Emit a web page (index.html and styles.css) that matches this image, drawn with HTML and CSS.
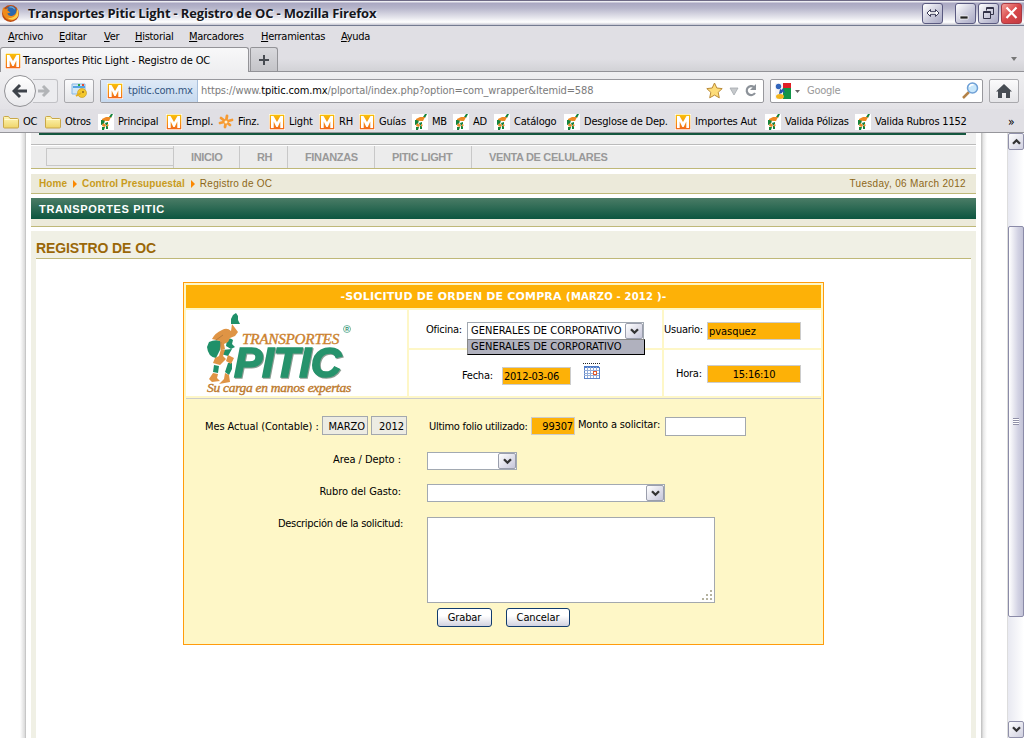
FILE: index.html
```html
<!DOCTYPE html>
<html lang="es">
<head>
<meta charset="utf-8">
<title>Transportes Pitic Light - Registro de OC</title>
<link rel="stylesheet" href="styles.css">
</head>
<body>
<svg class="defs" width="0" height="0">
  <defs>
    <linearGradient id="og" x1="0" y1="0" x2="0" y2="1"><stop offset="0" stop-color="#f9c20a"/><stop offset="1" stop-color="#f2681c"/></linearGradient>
    <linearGradient id="fg" x1="0" y1="0" x2="0" y2="1"><stop offset="0" stop-color="#fff7b8"/><stop offset="1" stop-color="#efd468"/></linearGradient>
    <symbol id="m" viewBox="0 0 16 16"><path fill="#fff" d="M0 0h16v16H0z"/><path fill="url(#og)" d="M.700.700h14.600v14.600H.700z"/><path fill="#fff" d="M2 2h2.500L8 8l3.500-6H14v12h-2.700V7.500L8.700 13H7.300L4.700 7.500V14H2z"/></symbol>
    <symbol id="folder" viewBox="0 0 16 16"><path fill="url(#fg)" stroke="#c9a748" d="M.5 13V3.500q0-1 1-1h4l1.500 2h7.500q1 0 1 1V13q0 1-1 1h-13q-1 0-1-1z"/><path stroke="#fffbd7" d="M1.500 5.500h13"/></symbol>
    <symbol id="run" viewBox="0 0 16 16"><path fill="#fff" d="M0 0h16v16H0z"/><path fill="#15843c" d="M11 3l2-3h2l-2 4zM3 6l4 0-1 4-3 1zM7 9l3-1v2l-2 2zM4 13h3l-1 3H4zM8 12h2v3H8z"/><path fill="#ee8a25" d="M4 5l4-2 5 0-2 4-3 0-4-1zM5 9l3 2-1 2-3-1zM9 10l2 1-2 2z"/></symbol>
    <symbol id="flower" viewBox="0 0 16 16"><g stroke="#f69a32" stroke-width="2.800" stroke-linecap="round"><path d="M9 2 7 13M3 4l9 7M2 9l12-3"/></g><circle cx="8" cy="8" r="1.500" fill="#fff1d3"/></symbol>
    <symbol id="chev" viewBox="0 0 9 7"><path d="M1 1.200 4.500 4.700 8 1.200" fill="none" stroke="#333" stroke-width="2.300"/></symbol>
  </defs>
</svg>
<header class="chrome">
  <div class="titlebar">
    <svg class="fox" viewBox="0 0 16 16"><circle cx="8" cy="8" r="8" fill="#bd4b12"/><circle cx="8.500" cy="6.500" r="5.500" fill="#2b68ac"/><path d="M1 2Q-1 9 4 13q6 4 10-2 2-4 0-8 0 6-4 7-4 1-5-2l3-1-3-2 1-2-3 1z" fill="#ef8a1c"/><path d="M14 3q1 7-5 9-3 1-5-1 5 5 10 1 3-4 0-9z" fill="#ffd04a"/><path d="M7 2q3-1 5 2" stroke="#71add9" fill="none"/></svg>
    <span class="title">Transportes Pitic Light - Registro de OC - Mozilla Firefox</span>
    <span class="wbtn wide"><svg viewBox="0 0 14 10" width="14" height="10"><path d="M1 5l3.500-3.500v2.200h5V1.500L13 5 9.500 8.500V6.300h-5v2.200z" fill="#fff" stroke="#3a3a55"/></svg></span>
    <span class="wbtn"><svg viewBox="0 0 20 20" width="20" height="20"><path d="M4 13h8v3H4z" fill="#222" stroke="#fff" stroke-width=".7"/></svg></span>
    <span class="wbtn"><svg viewBox="0 0 20 20" width="20" height="20"><path d="M7.500 7.500v-3h7v7h-3M7.500 5.500h7M4.500 8.500h7v7h-7zM4.500 9.500h7" fill="none" stroke="#333348"/></svg></span>
    <span class="wbtn close"><svg viewBox="0 0 20 20" width="20" height="20"><path d="M4.500 4.500l10 10.500M14.500 4.500l-10 10.500" stroke="#fff" stroke-width="2.200"/></svg></span>
  </div>
  <nav class="menu"><span><u>A</u>rchivo</span><span><u>E</u>ditar</span><span><u>V</u>er</span><span><u>H</u>istorial</span><span><u>M</u>arcadores</span><span><u>H</u>erramientas</span><span><u>A</u>yuda</span></nav>
  <div class="tabs">
    <div class="tab"><svg class="i16"><use href="#m"/></svg><span>Transportes Pitic Light - Registro de OC</span></div>
    <div class="newtab"><svg width="10" height="10"><path d="M5 0v10M0 5h10" stroke="#474b51" stroke-width="2"/></svg></div>
    <svg class="tabmenu" width="6" height="4"><path d="M0 0h6L3 4z" fill="#777"/></svg>
  </div>
  <div class="navbar">
    <div class="back"><svg width="16" height="16" viewBox="0 0 16 16"><path d="M8 2 2 8l6 6M2.500 8H15" fill="none" stroke="#3d4249" stroke-width="3"/></svg></div>
    <div class="fwd"><svg width="13" height="14" viewBox="0 0 13 14"><path d="M6 2l5 5-5 5M11 7H1" fill="none" stroke="#b2b4b7" stroke-width="3"/></svg></div>
    <div class="tool"><svg width="17" height="16" viewBox="0 0 17 16"><path d="M1 1h13v10H1z" fill="#d3e6f6" stroke="#86b8e4"/><path d="M2 4h12" stroke="#56a5e5" stroke-width="2"/><path d="M7 1h2v2H7z" fill="#31a64a"/><path d="M11 1h2v2h-2z" fill="#e24d34"/><circle cx="11" cy="10" r="4.500" fill="#f4c82d" stroke="#c9a02a" stroke-width=".7"/><path d="M5 13l5-3" stroke="#e4ae21" stroke-width="2"/><circle cx="12" cy="9" r="1" fill="#8f6819"/></svg></div>
    <div class="url">
      <div class="ident"><svg class="i16"><use href="#m"/></svg><span>tpitic.com.mx</span></div>
      <span class="addr">https://www.<b>tpitic.com.mx</b>/plportal/index.php?option=com_wrapper&amp;Itemid=588</span>
      <svg class="urlicons" width="52" height="18" viewBox="0 0 52 18"><path d="M9.500 1l2.300 5 5.400.6-4 3.700 1.100 5.500-4.800-2.700-4.800 2.700 1.100-5.500-4-3.700 5.400-.6z" fill="#fddc79" stroke="#ba8a36"/><path d="M25 6h8l-4 7z" fill="#c6c9cc" stroke="#a5a9af" stroke-width=".8"/><path d="M49 5a4.500 4.500 0 1 0 1 6" fill="none" stroke="#8c9299" stroke-width="2.200"/><path d="M51 2v6h-6z" fill="#8c9299"/></svg>
    </div>
    <div class="search">
      <svg width="25" height="16" viewBox="0 0 25 16"><path d="M8 0h8v16H8z" fill="#109447"/><path d="M8 0h8v5H8z" fill="#e01e25"/><path d="M0 0h8v16H0z" fill="#f5f5f8"/><circle cx="3.500" cy="3.500" r="2.700" fill="#3165bb"/><path d="M5 6q4 1 2 4l-3 1z" fill="#2554a8"/><ellipse cx="5" cy="13.500" rx="4" ry="2.500" fill="#f3b51c"/><path d="M8 5l-2 3 4 2z" fill="#2459b3"/><path d="M20 7h5l-2.500 3z" fill="#666"/></svg>
      <span>Google</span>
      <svg class="lens" width="17" height="17" viewBox="0 0 17 17"><path d="M7 10l-6 6" stroke="#b48248" stroke-width="2.500"/><circle cx="10.500" cy="6" r="5" fill="#c8e7fb" stroke="#6fa0d6" stroke-width="1.500"/><path d="M7.500 5q1-3 4-2" stroke="#fff" fill="none" stroke-width="1.500"/></svg>
    </div>
    <div class="tool home"><svg width="16" height="14" viewBox="0 0 16 14"><path d="M8 0l8 7.500h-2V14h-4V9H6v5H2V7.500H0z" fill="#474c53"/></svg></div>
  </div>
  <div class="bookmarks">
    <span><svg class="i16"><use href="#folder"/></svg>OC</span>
    <span><svg class="i16"><use href="#folder"/></svg>Otros</span>
    <span><svg class="i16"><use href="#run"/></svg>Principal</span>
    <span><svg class="i16"><use href="#m"/></svg>Empl.</span>
    <span><svg class="i16"><use href="#flower"/></svg>Finz.</span>
    <span><svg class="i16"><use href="#m"/></svg>Light</span>
    <span><svg class="i16"><use href="#m"/></svg>RH</span>
    <span><svg class="i16"><use href="#m"/></svg>Guías</span>
    <span><svg class="i16"><use href="#run"/></svg>MB</span>
    <span><svg class="i16"><use href="#run"/></svg>AD</span>
    <span><svg class="i16"><use href="#run"/></svg>Catálogo</span>
    <span><svg class="i16"><use href="#run"/></svg>Desglose de Dep.</span>
    <span><svg class="i16"><use href="#m"/></svg>Importes Aut</span>
    <span><svg class="i16"><use href="#run"/></svg>Valida Pólizas</span>
    <span><svg class="i16"><use href="#run"/></svg>Valida Rubros 1152</span>
    <b>»</b>
  </div>
</header>
<main class="view">
  <div class="shadow left"></div>
  <div class="page">
    <div class="banner"><i></i></div>
    <nav class="sitenav"><div class="q"></div><a class="a1">INICIO</a><a class="a2">RH</a><a class="a3">FINANZAS</a><a class="a4">PITIC LIGHT</a><a class="a5">VENTA DE CELULARES</a></nav>
    <div class="crumbs"><b class="c1">Home</b><i></i><b class="c2">Control Presupuestal</b><i></i><span>Registro de OC</span><time>Tuesday, 06 March 2012</time></div>
    <div class="company">TRANSPORTES PITIC</div>
    <div class="beige"></div>
    <section class="section">
      <h1>REGISTRO DE OC</h1>
      <div class="sheet">
        <form class="order">
          <div class="ohead">-SOLICITUD DE ORDEN DE COMPRA (<span>MARZO - 2012 </span>)-</div>
          <div class="cells">
            <div class="logo">
              <svg width="150" height="84" viewBox="0 0 150 84">
                <g class="runner">
                  <path fill="#1f9069" d="M27 3l3-2 2 3 0 4 2 4-9 0 0-5zM3 30q6-3 12-1l-1 9-4 8q-8-1-9-11zM21 28q3-3 6 0l-1 4 3 3-4 2-5-3zM16 38l10-1-4 7-7-2zM22 51l4 0 0 6-3 6-4-3zM8 53l5 1-1 7-5-1z"/>
                  <path fill="#df9445" d="M26 12l6 8-3 4-5 2-2 4-4 2 1 5-4 1-1-9-8-2q3-6 10-9 5-3 9 1zM15 37l4 1-2 6 3 3-6 6-7-2 2-5 4-2zM22 43l6 3-3 6-5-3zM7 61l5 1-1 4 3 3-8 1-3-3zM19 61l4 2 1 7-11 2 5-5z"/>
                  <path d="M10 28l7-5M15 30l-1 8" stroke="#9d6b35" fill="none" stroke-width=".6"/>
                </g>
                <text class="l1" x="36" y="32" textLength="97" lengthAdjust="spacingAndGlyphs">TRANSPORTES</text>
                <text class="l2" x="28" y="65" textLength="107" lengthAdjust="spacingAndGlyphs">PITIC</text>
                <circle cx="141" cy="17" r="3.500" fill="none" stroke="#51a58a" stroke-width=".8"/>
                <text class="r" x="139.300" y="19">R</text>
                <text class="l3" x="1" y="79.500" textLength="144" lengthAdjust="spacingAndGlyphs">Su carga en manos expertas</text>
              </svg>
            </div>
            <div class="cell oficina"><label>Oficina:</label>
              <div class="select"><span>GENERALES DE CORPORATIVO</span><em><svg width="9" height="7"><use href="#chev"/></svg></em><div class="drop">GENERALES DE CORPORATIVO</div></div>
            </div>
            <div class="cell usuario"><label>Usuario:</label><div class="amber">pvasquez</div></div>
            <div class="cell fecha"><label>Fecha:</label><div class="amber">2012-03-06</div>
              <svg width="17" height="16" viewBox="0 0 17 16" shape-rendering="crispEdges"><path d="M1 4h15v11H1z" fill="#fff" stroke="#5a82c8"/><path d="M1 3h15v2H1z" fill="#4f7cc9"/><path d="M4.500 4v11M7.500 4v11M10.500 4v11M13.500 4v11M1 7.500h15M1 10.500h15M1 12.500h15" stroke="#95aed9"/><path d="M0 .5h17" stroke="#222" stroke-dasharray="1 1"/><path d="M10.500 8h3v3h-3z" fill="#fff" stroke="#e0582a"/></svg>
            </div>
            <div class="cell hora"><label>Hora:</label><div class="amber">15:16:10</div></div>
          </div>
          <div class="fields">
            <div class="r1"><label>Mes Actual (Contable) :</label><div class="ro mes">MARZO</div><div class="ro ano">2012</div><label class="ult">Ultimo folio utilizado:</label><div class="amber folio">99307</div><label class="mon">Monto a solicitar:</label><div class="inp"></div></div>
            <div class="row"><label class="area">Area / Depto :</label><div class="select s2"><span></span><em><svg width="9" height="7"><use href="#chev"/></svg></em></div></div>
            <div class="row"><label class="rubro">Rubro del Gasto:</label><div class="select s3"><span></span><em><svg width="9" height="7"><use href="#chev"/></svg></em></div></div>
            <div class="row"><label class="desc">Descripción de la solicitud:</label><div class="area-text"><svg width="10" height="10" fill="#b5b3a0"><path d="M8 0h2v2H8zM8 4h2v2H8zM4 4h2v2H4zM8 8h2v2H8zM4 8h2v2H4zM0 8h2v2H0z"/></svg></div></div>
            <div class="buttons"><div class="btn grabar">Grabar</div><div class="btn cancelar">Cancelar</div></div>
          </div>
        </form>
      </div>
    </section>
  </div>
  <div class="shadow right"></div>
  <div class="scroll"><div class="sb"><svg class="up" width="9" height="7"><use href="#chev"/></svg></div><div class="thumb"><i></i></div><div class="sb"><svg width="9" height="7"><use href="#chev"/></svg></div></div>
</main>
</body>
</html>
```
FILE: styles.css
```css
*{box-sizing:border-box}
body{margin:0;width:1024px;height:738px;overflow:hidden;background:#fff;color:#000;font:11px/14px "DejaVu Sans Condensed","DejaVu Sans",sans-serif;font-stretch:condensed;letter-spacing:-.25px;white-space:nowrap;display:flex;flex-direction:column}
.defs{position:absolute}
svg{display:block;flex:none}
.i16{width:16px;height:16px}
.chrome{height:133px;flex:none;background:#e0dfe4;border-bottom:1px solid #96969b}
.titlebar{height:26px;display:flex;align-items:center;padding:0 0 0 2px;border-top:1px solid #6d6985;border-bottom:1px solid #747b91;background:linear-gradient(#fff 0,#aaa8c2 10%,#b7b6cb 30%,#e9e9ef 72%,#fff 88%,#c4c4d0 100%)}
.fox{width:17px;height:17px;margin-right:9px}
.title{font:bold 13px/20px "Open Sans",sans-serif;color:#16161c;width:894px;letter-spacing:-.17px;text-shadow:1px 1px 1px #fff}
.wbtn{width:21px;height:21px;border:1px solid #5a5a80;border-radius:3px;background:linear-gradient(135deg,#fff,#c6c6d8 60%,#a9a9c4);display:flex;align-items:center;justify-content:center;margin-right:2px;flex:none}
.wbtn.wide{margin-right:12px}
.wbtn.close{background:linear-gradient(135deg,#f3a099,#d9484a 50%,#c23b42);border-color:#a83a44;margin:0}
.menu{height:21px;display:grid;grid-template-columns:51px 45px 31px 54px 72px 80px auto;padding:4px 0 0 8px;letter-spacing:-.28px}
.tabs{height:25px;display:flex;align-items:flex-end;border-bottom:1px solid #929297;background:linear-gradient(#e0dfe4 50%,#d2d2d6)}
.tab{height:25px;width:249px;border:1px solid #939397;border-bottom:0;border-radius:3px 3px 0 0;background:linear-gradient(#f8f8f9,#eeeef0);margin-bottom:-1px;display:flex;align-items:center;gap:2px;padding:2px 0 0 4px;letter-spacing:-.14px}
.newtab{width:28px;height:24px;margin-left:1px;border:1px solid #939397;border-bottom:0;border-radius:2px 3px 0 0;background:linear-gradient(#d9d9dd,#c4c4c8);display:flex;align-items:center;justify-content:center}
.tabmenu{margin:0 7px 10px auto}
.navbar{height:37px;display:flex;align-items:center;padding-left:4px;background:linear-gradient(#efeff1,#e3e2e6)}
.back{width:32px;height:32px;border:1px solid #929296;border-radius:50%;background:linear-gradient(#fff,#e9e9ec);display:flex;align-items:center;justify-content:center;z-index:1}
.fwd{width:25px;height:24px;margin-left:-3px;border:1px solid #c1c1c5;border-left:0;border-radius:0 3px 3px 0;display:flex;align-items:center;padding-left:4px;background:#ececef}
.tool{width:30px;height:24px;border:1px solid #a9a9ad;border-radius:2px;margin-left:6px;display:flex;align-items:center;justify-content:center;background:linear-gradient(#fbfbfc,#e5e5e8)}
.url{width:664px;height:24px;margin-left:6px;background:#fff;border:1px solid #98989d;border-radius:2px;display:flex;align-items:center}
.ident{width:97px;height:22px;background:linear-gradient(#dfeaf7,#c6d9ef);border-right:1px solid #a9c0dc;display:flex;align-items:center;gap:4px;padding-left:6px;color:#33557f;letter-spacing:-.25px}
.ident span{margin-left:1px}
.addr{margin:1px 0 0 3px;color:#7b7b7b;letter-spacing:-.13px}
.addr b{font-weight:400;color:#000}
.urlicons{margin:0 6px 0 auto}
.search{width:213px;height:24px;margin-left:6px;border:1px solid #98989d;border-radius:2px;background:#fff;display:flex;align-items:center;padding:0 3px 0 4px;color:#999}
.search span{margin:1px 0 0 7px}
.lens{margin-left:auto}
.bookmarks{height:24px;display:grid;grid-template-columns:42px 53px 68px 52px 51px 50px 40px 53px 41px 41px 70px 111px 90px 90px 153px auto;align-items:center;padding:1px 0 0 3px;letter-spacing:-.2px}
.bookmarks span{display:flex;align-items:center;gap:4px}
.bookmarks b{font-size:12px;font-weight:400}
.view{flex:1;display:flex;min-height:0}
.shadow{width:6px;flex:none}
.left{margin-left:20px;background:linear-gradient(90deg,#fff,#ddd 75%,#bbb)}
.page{width:955px;padding:0 5px;flex:none}
.right{background:linear-gradient(90deg,#bbb,#e8e8e8 40%,#fff)}
.banner{height:12px;background:#efefef;border-bottom:1px solid #bbb;padding:0 10px 0 8px}
.banner i{display:block;height:2px;background:#15573f}
.sitenav{margin-top:1px;height:23px;background:#ececec;border-bottom:1px solid #bfb878;display:flex;font:bold 11px/22px "Liberation Sans",sans-serif;letter-spacing:-.35px;color:#999}
.q{width:128px;height:18px;border:1px solid #c8c8c8;margin:2px 0 0 15px;flex:none}
.sitenav a{border-left:1px solid #c8c8c8;padding-left:17px;margin-left:-1px;margin-right:1px}
.sitenav .a1{width:66px}.sitenav .a2{width:48px}.sitenav .a3{width:87px}.sitenav .a4{width:97px}
.crumbs{margin-top:5px;height:20px;background:#eceada;border-bottom:1px solid #bfb878;display:flex;align-items:center;padding:0 10px 0 8px;font:10px/18px "Liberation Sans",sans-serif;letter-spacing:.25px;color:#8d6718}
.crumbs b{color:#c89b1c;letter-spacing:.08px}
.crumbs i{border-left:4px solid #fb8800;border-top:4px solid transparent;border-bottom:4px solid transparent;margin:0 5px 0 6px}
.crumbs time{margin-left:auto;letter-spacing:.32px}
.company{margin-top:4px;height:21px;background:linear-gradient(#4b7c66,#0c5640);color:#fff;font:bold 11px/22px "Liberation Sans",sans-serif;letter-spacing:.68px;padding-left:8px}
.beige{height:8px;background:#eceada;border-bottom:1px solid #bfb878}
.section{margin-top:4px;height:510px;background:#f0f0e5;padding:0 5px}
h1{margin:0;height:28px;border-bottom:1px solid #bfb878;color:#9a6708;font:bold 14px/34px "Liberation Sans",sans-serif;letter-spacing:-.1px}
.sheet{height:490px;background:#fff;padding:23px 0 0 147px}
.order{width:641px;height:363px;border:1px solid #ff9c0c;background:#fef7c7;padding:2px}
.ohead{height:23px;background:#fdb107;color:#fff;font:bold 11px/24px "DejaVu Sans",sans-serif;letter-spacing:.17px;text-align:center}
.ohead span{font-size:10px}
.cells{margin-top:2px;height:89px;border-bottom:1px solid #ccc;display:grid;grid-template:38px 46px / 221px 253px 157px;gap:2px}
.logo{grid-row:1/3;background:#fff;padding:2px 0 0 20px}
.l1{font:italic 15.500px "Liberation Serif",serif;fill:#cc822e;stroke:#cc822e;stroke-width:.4px}
.l2{font:italic 700 42px "Liberation Sans",sans-serif;fill:#26936c;stroke:#26936c;stroke-width:1.600px;filter:drop-shadow(1px 1px .5px #8c9d93)}
.l3{font:italic 12px "Liberation Serif",serif;fill:#bd7a2d;stroke:#bd7a2d;stroke-width:.35px}
.r{font:bold 5px "Liberation Sans";fill:#278b69}
.cell{background:#fff;display:flex;align-items:flex-start}
.amber{height:18px;border:1px solid #ccc;background:#fdb107;padding:1px 1px;line-height:15px}
.oficina{padding:12px 0 0 17px}
.oficina label{width:41px;margin-top:1px}
.select{height:18px;border:1px solid #a2a9b2;background:#fff;display:flex;position:relative;padding:0}
.select span{flex:1;line-height:16px;padding-left:3px;letter-spacing:.02px}
.select em{width:18px;height:16px;border:1px solid #9a9eac;border-radius:2px;background:linear-gradient(135deg,#fff,#c6c6da);display:flex;align-items:center;justify-content:center}
.oficina .select{width:177px}
.drop{position:absolute;left:-1px;top:16px;width:178px;height:16px;background:#b0b1be;border:1px solid #000;border-left-color:#888;border-top-color:#888;line-height:14px;padding-left:3px;letter-spacing:.02px;z-index:2}
.usuario{padding:12px 0 0 0}
.usuario label{width:43px;margin:1px 0 0}
.usuario .amber{letter-spacing:-.05px}
.usuario .amber,.hora .amber{width:94px}
.fecha{padding:17px 0 0 53px}
.fecha label{width:40px;margin-top:2px}
.fecha .amber{width:69px}
.fecha svg{margin:-4px 0 0 12px}
.hora{padding:15px 0 0 12px}
.hora label{width:31px;margin-top:2px}
.hora .amber{text-align:center}
.fields{padding-left:19px}
.r1{display:flex;height:53px;padding-top:17px}
.r1 label{margin-top:4px;width:117px;flex:none;letter-spacing:-.08px}
.ro{height:19px;border:1px solid #a3a8ae;background:#edece3;text-align:right;padding:2px 2px;line-height:15px;letter-spacing:-.05px}
.mes{width:46px;margin-right:3px}.ano{width:36px}
.r1 .ult{width:102px;margin-left:22px;letter-spacing:-.28px}
.folio{width:44px;text-align:right;margin-top:1px;padding:1px;letter-spacing:-.15px}
.r1 .mon{width:84px;margin:2px 0 0 3px;letter-spacing:-.17px}
.inp{width:81px;height:19px;border:1px solid #a3a8ae;background:#fff;margin:1px 0 0 3px}
.row{display:flex;height:32px}
.row label{width:222px;padding:1px 26px 0 0;text-align:right;letter-spacing:-.05px}
.row .desc{padding:0 24px 0 0;letter-spacing:-.29px}
.s2{width:90px}.s3{width:238px}
.row:nth-child(4){height:92px;padding-top:1px}
.area-text{width:288px;height:86px;border:1px solid #a3a8ae;background:#fff;display:flex;align-items:flex-end;justify-content:flex-end;padding:2px}
.buttons{display:flex;gap:14px;padding-left:232px}
.btn{height:19px;border:1px solid #123c6d;border-radius:3px;background:linear-gradient(#fff 40%,#d2d2e0);text-align:center;line-height:18px;letter-spacing:-.1px}
.grabar{width:55px}.cancelar{width:64px}
.scroll{margin-left:20px;width:17px;display:flex;flex-direction:column;background:linear-gradient(90deg,#e8e9f1,#fff);border-left:1px solid #ddd;flex:none}
.sb{width:16px;height:17px;border:1px solid #9090aa;border-radius:2px;background:linear-gradient(135deg,#fff,#cfcfdf);display:flex;align-items:center;justify-content:center;flex:none}
.up{transform:rotate(180deg)}
.thumb{margin:76px 0 104px;height:391px;border:1px solid #8b8ba8;border-radius:2px;background:linear-gradient(90deg,#fff,#d2d2e3 65%,#c2c2d6);display:flex;align-items:center;justify-content:center}
.thumb i{width:6px;height:7px;background:repeating-linear-gradient(#9090a8 0 1px,#fff 1px 2px)}
```
